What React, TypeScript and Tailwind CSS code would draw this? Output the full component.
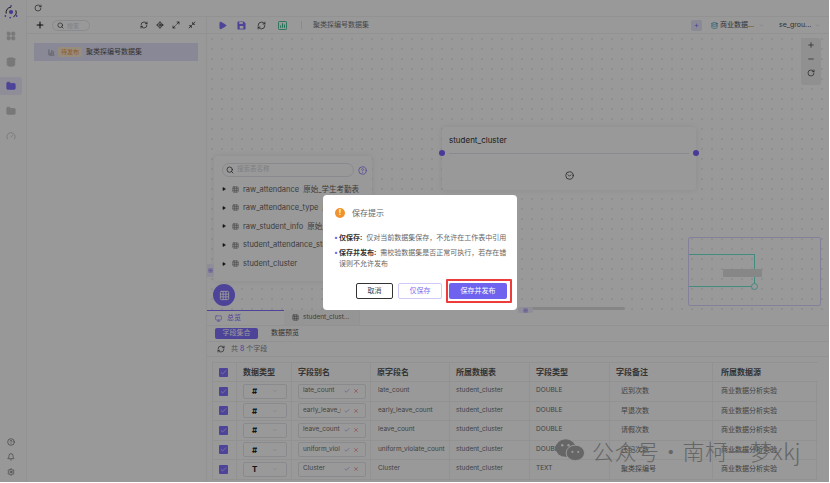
import React from 'react'
import {
  Plus, Minus, Search, RotateCw, RefreshCw, LocateFixed, Maximize2, Minimize2, Play, ChevronDown, CircleChevronDown,
  CircleHelp, Bell, Settings, LayoutGrid, Database, Folder, Gauge, Check, X, Grid3x3, Monitor, Grip, BarChart3,
} from 'lucide-react'

const rows = [
  { type: '#', alias: 'late_count', name: 'late_count', kind: 'DOUBLE', note: '迟到次数' },
  { type: '#', alias: 'early_leave_c', name: 'early_leave_count', kind: 'DOUBLE', note: '早退次数' },
  { type: '#', alias: 'leave_count', name: 'leave_count', kind: 'DOUBLE', note: '请假次数' },
  { type: '#', alias: 'uniform_viol', name: 'uniform_violate_count', kind: 'DOUBLE', note: '违纪次数' },
  { type: 'T', alias: 'Cluster', name: 'Cluster', kind: 'TEXT', note: '聚类探编号' },
]

const tables = [
  { name: 'raw_attendance', label: '原始_学生考勤表' },
  { name: 'raw_attendance_type', label: '原始_考勤类型' },
  { name: 'raw_student_info', label: '原始_学生信息' },
  { name: 'student_attendance_stats', label: '' },
  { name: 'student_cluster', label: '' },
]

const gridCols = 'grid grid-cols-[23px_55px_79px_79px_80px_80px_103px_105px]'

function Sidebar() {
  return (
    <div className="w-[27px] shrink-0 border-r border-gray-100 flex flex-col items-center pr-[5px] bg-[#fdfdfd]">
      <svg viewBox="0 0 20 20" className="w-[16px] h-[16px] mt-[4px] text-[#6f5ff0]">
        <circle cx="10" cy="10" r="2.6" fill="currentColor" />
        <path d="M4 12a6.5 6.5 0 0 1 6-8M16 8a6.5 6.5 0 0 1-3 8" fill="none" stroke="#222" strokeWidth="1.2" />
        <circle cx="10" cy="2.5" r="1.1" fill="currentColor" />
        <circle cx="3" cy="15" r="1.1" fill="currentColor" />
        <circle cx="17" cy="15" r="1.1" fill="currentColor" />
        <circle cx="9" cy="17" r="1.1" fill="currentColor" />
      </svg>
      <div className="mt-[3px] flex flex-col items-center w-full">
        <div className="h-[26px] flex items-center"><LayoutGrid className="w-[10px] h-[10px] text-[#c8c8c8] fill-[#c8c8c8]" /></div>
        <div className="h-[25px] flex items-center"><Database className="w-[10px] h-[10px] text-[#c8c8c8] fill-[#c8c8c8]" /></div>
        <div className="my-[3px] h-[18px] w-[22px] flex items-center justify-center bg-[#eeecfd] rounded-r-[3px]">
          <Folder className="w-[10px] h-[10px] text-[#8070ff] fill-[#8070ff]" />
        </div>
        <div className="h-[25px] flex items-center"><Folder className="w-[10px] h-[10px] text-[#c8c8c8] fill-[#c8c8c8]" /></div>
        <div className="h-[25px] flex items-center"><Gauge className="w-[10px] h-[10px] text-[#c8c8c8]" /></div>
      </div>
      <div className="mt-auto mb-[6px] flex flex-col items-center gap-[7px] text-[#666]">
        <CircleHelp className="w-[8px] h-[8px]" />
        <Bell className="w-[8px] h-[8px]" />
        <Settings className="w-[8px] h-[8px]" />
      </div>
    </div>
  )
}

function TreePanel() {
  return (
    <div className="w-[180px] shrink-0 border-r border-gray-100">
      <div className="h-[17px] flex items-center pl-[8px] border-b border-gray-100">
        <Plus className="w-[10px] h-[10px] text-[#111]" strokeWidth={2.5} />
        <div className="ml-[7px] w-[38px] h-[11px] border border-gray-200 rounded-full flex items-center pl-[4px] gap-[3px]">
          <Search className="w-[7px] h-[7px] text-[#222]" />
          <span className="text-[6px] text-gray-300">搜索</span>
        </div>
        <div className="ml-[50px] flex items-center gap-[8px] text-[#222]">
          <RefreshCw className="w-[8px] h-[8px]" />
          <LocateFixed className="w-[8px] h-[8px]" />
          <Maximize2 className="w-[8px] h-[8px]" />
          <Minimize2 className="w-[8px] h-[8px]" />
        </div>
      </div>
      <div className="mt-[9px] ml-[7px] w-[164px] h-[18px] bg-[#e4e3fb] rounded-[1px] flex items-center pl-[14px]">
        <BarChart3 className="w-[7px] h-[7px] text-[#777]" />
        <span className="ml-[3px] w-[24px] h-[10px] leading-[10px] text-center bg-[#fde9cf] text-[#f09a3e] text-[6px] rounded-[1px]">待发布</span>
        <span className="ml-[4px] text-[7px] text-[#555]">聚类探编号数据集</span>
      </div>
    </div>
  )
}

function Toolbar() {
  return (
    <div className="h-[17px] flex items-center border-b border-gray-100 pl-[11px] pr-[9px] bg-white">
      <Play className="w-[9px] h-[9px] text-[#8070ff] fill-[#8070ff]" />
      <svg viewBox="0 0 10 10" className="ml-[10px] w-[9px] h-[9px]">
        <path d="M0.5 1.5a1 1 0 0 1 1-1h6l2 2v6a1 1 0 0 1-1 1h-7a1 1 0 0 1-1-1z" fill="#8070ff" />
        <rect x="2.5" y="1.2" width="4" height="2" fill="#fff" />
        <rect x="3" y="5.5" width="4" height="3" fill="#fff" />
      </svg>
      <RefreshCw className="ml-[11px] w-[9px] h-[9px] text-[#333]" />
      <svg viewBox="0 0 10 10" className="ml-[12px] w-[9px] h-[9px]">
        <rect x="0.5" y="0.5" width="9" height="9" rx="1" fill="none" stroke="#35b98f" />
        <path d="M2.8 7.5V5M5 7.5V2.5M7.2 7.5V4" stroke="#35b98f" strokeWidth="1.1" />
      </svg>
      <div className="ml-[14px] w-px h-[8px] bg-gray-200" />
      <span className="ml-[11px] text-[7px] text-[#777]">聚类探编号数据集</span>
      <div className="ml-auto w-[11px] h-[11px] rounded-[2px] bg-[#e6e4fb] flex items-center justify-center">
        <Plus className="w-[5px] h-[5px] text-[#8070ff]" strokeWidth={3} />
      </div>
      <Database className="ml-[9px] w-[7px] h-[7px] text-[#2a8db5]" />
      <span className="ml-[2px] text-[7px] text-[#555] w-[36px] whitespace-nowrap">商业数据...</span>
      <ChevronDown className="ml-[3px] w-[5px] h-[5px] text-[#bbb]" />
      <span className="ml-[15px] text-[7px] text-[#555] w-[36px] whitespace-nowrap">se_grou...</span>
      <ChevronDown className="w-[5px] h-[5px] text-[#bbb]" />
    </div>
  )
}

function Canvas() {
  return (
    <div className="relative h-[276px] bg-white bg-[radial-gradient(#dcdcdc_0.6px,transparent_0.8px)] bg-[length:10px_10px]">
      <div className="absolute left-[594px] top-[4px] w-[20px] h-[47px] bg-[#f1f1f1] rounded-[3px] flex flex-col items-center pt-[3px] gap-[6px] text-[#333]">
        <Plus className="w-[8px] h-[8px]" />
        <Minus className="w-[8px] h-[8px]" />
        <RotateCw className="w-[8px] h-[8px]" />
      </div>

      <div className="absolute left-[235px] top-[93px] w-[254px] h-[63px] bg-white rounded-[4px] shadow-[0_0_6px_rgba(0,0,0,0.08)] px-[7px]">
        <div className="h-[27px] flex items-center border-b border-gray-200 text-[8px] text-[#333]">student_cluster</div>
        <div className="flex justify-center mt-[17px]">
          <CircleChevronDown className="w-[9px] h-[9px] text-[#333]" />
        </div>
        <span className="absolute -left-[3px] top-[23px] w-[6px] h-[6px] rounded-full bg-[#7a62ff]" />
        <span className="absolute -right-[3px] top-[23px] w-[6px] h-[6px] rounded-full bg-[#7a62ff]" />
      </div>

      <div className="absolute left-[7px] top-[122px] w-[158px] h-[125px] bg-white rounded-[4px] shadow-[0_0_6px_rgba(0,0,0,0.08)] pl-[8px] pt-[7px]">
        <div className="flex items-center">
          <div className="w-[132px] h-[14px] border border-gray-200 rounded-full flex items-center pl-[3px] gap-[3px]">
            <Search className="w-[8px] h-[8px] text-[#222]" />
            <span className="text-[6.5px] text-gray-300">搜索表名称</span>
          </div>
          <CircleHelp className="ml-[4px] w-[9px] h-[9px] text-[#8070ff]" />
        </div>
        <div className="mt-[3px] w-[150px] overflow-hidden">
          {tables.map(t => (
            <div key={t.name} className="h-[18.6px] flex items-center whitespace-nowrap text-[7.5px] text-[#666]">
              <Play className="w-[4px] h-[4px] text-[#222] fill-[#222] shrink-0" />
              <Grid3x3 className="ml-[6px] w-[7px] h-[7px] text-[#777] shrink-0" />
              <span className="ml-[4px]">{t.name}</span>
              {t.label && <span className="ml-[4px]">{t.label}</span>}
            </div>
          ))}
        </div>
      </div>

      <div className="absolute left-[6px] top-[250px] w-[22px] h-[22px] rounded-full bg-[#8070ff] flex items-center justify-center">
        <Grid3x3 className="w-[11px] h-[11px] text-white" />
      </div>
      <div className="absolute left-0 top-[230px] w-[7px] h-[13px] bg-[#eeecfd] rounded-r-[2px] flex items-center justify-center">
        <Grip className="w-[5px] h-[5px] text-[#8070ff]" />
      </div>

      <div className="absolute left-[481px] top-[203px] w-[133px] h-[69px] border border-[#dcd6ff] rounded-[2px]">
        <div className="absolute left-0 top-[16px] w-[66px] h-[33px] border-t border-r border-b border-[#6fe8d8]" />
        <div className="absolute left-[34px] top-[31px] w-[39px] h-[8px] bg-[#e2e2e2]" />
        <span className="absolute left-[62px] top-[45px] w-[7px] h-[7px] rounded-full border border-[#6fe8d8] bg-white" />
      </div>
      <div className="absolute left-[313px] top-[273px] w-[105px] h-[3px] bg-[#dedede] rounded-full" />
      <div className="absolute left-[311px] top-[273px] w-[15px] h-[6px] bg-[#eeecfd] rounded-[2px] flex items-center justify-center">
        <Grip className="w-[5px] h-[5px] text-[#8070ff]" />
      </div>
    </div>
  )
}

function RowCheck() {
  return (
    <div className="flex justify-center pr-[3px]">
      <span className="w-[9px] h-[9px] bg-[#8070ff] rounded-[1px] flex items-center justify-center">
        <Check className="w-[7px] h-[7px] text-white" />
      </span>
    </div>
  )
}

function FieldsTable() {
  return (
    <div className="relative ml-[5px] mt-[5px] w-[606px] border-l border-t border-gray-100 text-[6.5px] text-[#707070]">
      <div className={`${gridCols} h-[19px] items-center border-b border-gray-100`}>
        <RowCheck />
        {['数据类型', '字段别名', '原字段名', '所属数据表', '字段类型', '字段备注'].map(h => (
          <div key={h} className="h-full flex items-center pl-[6px] border-l border-gray-100 text-[8px] font-bold text-[#555]">{h}</div>
        ))}
        <div className="h-full flex items-center pl-[8px] border-l border-gray-100 text-[8px] font-bold text-[#555]">所属数据源</div>
      </div>
      {rows.map(r => (
        <div key={r.name} className={`${gridCols} h-[19.5px] items-center border-b border-gray-100`}>
          <RowCheck />
          <div className="h-full flex items-center pl-[6px] border-l border-gray-100">
            <div className="w-[44px] h-[15px] border border-gray-200 rounded-[2px] flex items-center px-[8px] justify-between">
              <span className="text-[8px] font-bold text-[#222]">{r.type}</span>
              <ChevronDown className="w-[6px] h-[6px] text-[#ccc]" />
            </div>
          </div>
          <div className="h-full flex items-center pl-[6px] border-l border-gray-100">
            <div className="w-[68px] h-[15px] border border-gray-200 rounded-[2px] flex items-center pl-[4px] pr-[6px]">
              <span className="w-[38px] overflow-hidden whitespace-nowrap">{r.alias}</span>
              <Check className="ml-auto w-[6px] h-[6px] text-[#8070ff]" />
              <X className="ml-[3px] w-[6px] h-[6px] text-[#ee5066]" />
            </div>
          </div>
          <div className="h-full flex items-center pl-[7px] border-l border-gray-100 whitespace-nowrap">{r.name}</div>
          <div className="h-full flex items-center pl-[6px] border-l border-gray-100">student_cluster</div>
          <div className="h-full flex items-center pl-[6px] border-l border-gray-100">{r.kind}</div>
          <div className="h-full flex items-center pl-[11px] border-l border-gray-100 text-[7px]">{r.note}</div>
          <div className="h-full flex items-center pl-[8px] border-l border-r border-gray-100 text-[7px]">商业数据分析实验</div>
        </div>
      ))}
    </div>
  )
}

function BottomPanel() {
  return (
    <div className="flex-1 overflow-hidden bg-white">
      <div className="h-[16px] flex border-b border-gray-100">
        <div className="w-[77px] border-t border-[#8070ff] flex items-center pl-[8px] gap-[5px] text-[7px] text-[#8070ff]">
          <Monitor className="w-[7px] h-[7px]" />总览
        </div>
        <div className="w-[76px] bg-[#f8f8f8] border-r border-gray-100 flex items-center pl-[8px] gap-[4px] text-[6.5px] text-[#666]">
          <Grid3x3 className="w-[7px] h-[7px]" />student_clust...
        </div>
      </div>
      <div className="h-[16px] flex items-center pl-[8px] border-b border-gray-100">
        <span className="w-[43px] h-[11px] rounded-[2px] bg-[#8070ff] text-white text-[7px] flex items-center justify-center">字段集合</span>
        <span className="ml-[13px] text-[7px] text-[#555]">数据预览</span>
      </div>
      <div className="h-[15px] flex items-center pl-[10px] border-b border-gray-100 text-[7px] text-[#888]">
        <RefreshCw className="w-[8px] h-[8px] text-[#333]" />
        <span className="ml-[6px]">共 <span className="text-[#8070ff]">8</span> 个字段</span>
      </div>
      <FieldsTable />
    </div>
  )
}

function SaveDialog() {
  return (
    <div className="absolute left-[323px] top-[195px] w-[194px] h-[115px] bg-white rounded-[4px] pt-[11px] pl-[11px]">
      <div className="flex items-center h-[14px] pl-[1px]">
        <span className="w-[10px] h-[10px] rounded-full bg-[#f0922e] text-white text-[7px] font-bold flex items-center justify-center">!</span>
        <span className="ml-[7px] text-[8px] text-[#666]">保存提示</span>
      </div>
      <div className="mt-[12px] w-[173px] text-[7px] leading-[11px] text-[#666]">
        <div className="flex">
          <span className="w-[5px] shrink-0 text-[#6f5ff0]">•</span>
          <p className="whitespace-nowrap"><b className="text-[#333]">仅保存:</b>&nbsp; 仅对当前数据集保存，不允许在工作表中引用</p>
        </div>
        <div className="flex mt-[4px]">
          <span className="w-[5px] shrink-0 text-[#6f5ff0]">•</span>
          <p><b className="text-[#333]">保存并发布:</b>&nbsp; 需校验数据集是否正常可执行，若存在错误则不允许发布</p>
        </div>
      </div>
      <div className="absolute left-[33px] top-[84px] flex items-center text-[7px]">
        <button className="w-[37px] h-[16px] border border-[#333] rounded-[2px] text-[#444]">取消</button>
        <button className="ml-[5px] w-[44px] h-[16px] border border-[#cfcaf8] rounded-[2px] text-[#7c70ee]">仅保存</button>
        <div className="ml-[4px] w-[66px] h-[24px] border-2 border-[#ee3b3b] rounded-[1px] flex items-center pl-[1px]">
          <button className="w-[58px] h-[16px] bg-[#6f62ee] rounded-[2px] text-white">保存并发布</button>
        </div>
      </div>
    </div>
  )
}

export default function App() {
  return (
    <div className="relative w-[830px] h-[483px] overflow-hidden bg-white font-['Inter','Noto_Sans_CJK_SC',sans-serif]">
      <div className="h-[482px] w-[829px] flex">
        <Sidebar />
        <div className="flex-1 flex flex-col min-w-0">
          <div className="h-[17px] flex items-center pl-[7px] border-b border-gray-100">
            <RotateCw className="w-[8px] h-[8px] text-[#333]" />
          </div>
          <div className="flex-1 flex min-h-0">
            <TreePanel />
            <div className="flex-1 flex flex-col min-w-0">
              <Toolbar />
              <Canvas />
              <BottomPanel />
            </div>
          </div>
        </div>
      </div>

      <div className="absolute inset-x-0 top-0 h-[482px] w-[829px] bg-black/40" />
      <SaveDialog />

      <div className="absolute left-[555px] top-[436px] flex items-center text-[#666]">
        <svg viewBox="0 0 32 24" className="w-[31px] h-[24px]">
          <ellipse cx="11" cy="10" rx="10.5" ry="9" fill="#666" />
          <ellipse cx="21" cy="15" rx="9.5" ry="8" fill="#666" stroke="#999" strokeWidth="1" />
          <circle cx="7.5" cy="7" r="1.3" fill="#999" />
          <circle cx="14" cy="7" r="1.3" fill="#999" />
          <circle cx="18" cy="14" r="1.1" fill="#999" />
          <circle cx="24" cy="14" r="1.1" fill="#999" />
        </svg>
        <div className="ml-[6px] flex text-[22px] leading-[28px] whitespace-nowrap tracking-[0.5px] font-light font-['Noto_Sans_CJK_SC',sans-serif]">
          <span>公众号</span>
          <span className="w-[23px] text-center">·</span>
          <span>南柯一梦xkj</span>
        </div>
      </div>
    </div>
  )
}
